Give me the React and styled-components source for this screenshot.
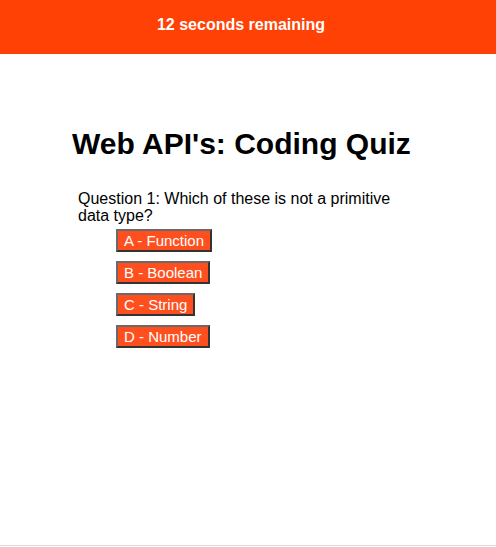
import React from "react";
import styled, { createGlobalStyle } from "styled-components";

const Global = createGlobalStyle`
  html, body { margin: 0; padding: 0; background: #fff; }
  body { font-family: "Liberation Sans", Arial, sans-serif; color: #000; }
`;

const Page = styled.div`
  box-sizing: border-box;
  border-bottom: 1px solid #dcdcdc;
  height: 546px;
`;

const Header = styled.header`
  background: #ff4106;
  height: 54px;
  display: flex;
  align-items: center;
  justify-content: center;
  padding: 0 14px 4px 0;
  box-sizing: border-box;
  color: #fff;
  font-weight: bold;
  font-size: 16px;
`;

const Main = styled.main`
  padding: 73px 0 0 72px;
`;

const Title = styled.h1`
  margin: 0;
  font-size: 30px;
  font-weight: bold;
  line-height: 34px;
`;

const Quiz = styled.section`
  margin: 29px 0 0 6px;
  width: 330px;
`;

const Question = styled.p`
  margin: 0 0 5px;
  font-size: 16px;
  line-height: 17px;
`;

const Choices = styled.div`
  display: flex;
  flex-direction: column;
  align-items: flex-start;
  gap: 9px;
  padding-left: 38px;
`;

const Choice = styled.button`
  font-family: "Liberation Sans", Arial, sans-serif;
  font-size: 15px;
  line-height: 17px;
  color: #fff;
  background: #ff4f1f;
  border: 2px solid #555;
  border-color: #6a6a6a #333 #333 #6a6a6a;
  padding: 1px 6px;
  cursor: pointer;
`;

const choices = ["A - Function", "B - Boolean", "C - String", "D - Number"];

export default function App() {
  return (
    <Page>
      <Global />
      <Header>12 seconds remaining</Header>
      <Main>
        <Title>Web API's: Coding Quiz</Title>
        <Quiz>
          <Question>Question 1: Which of these is not a primitive data type?</Question>
          <Choices>
            {choices.map((c) => (
              <Choice key={c}>{c}</Choice>
            ))}
          </Choices>
        </Quiz>
      </Main>
    </Page>
  );
}
